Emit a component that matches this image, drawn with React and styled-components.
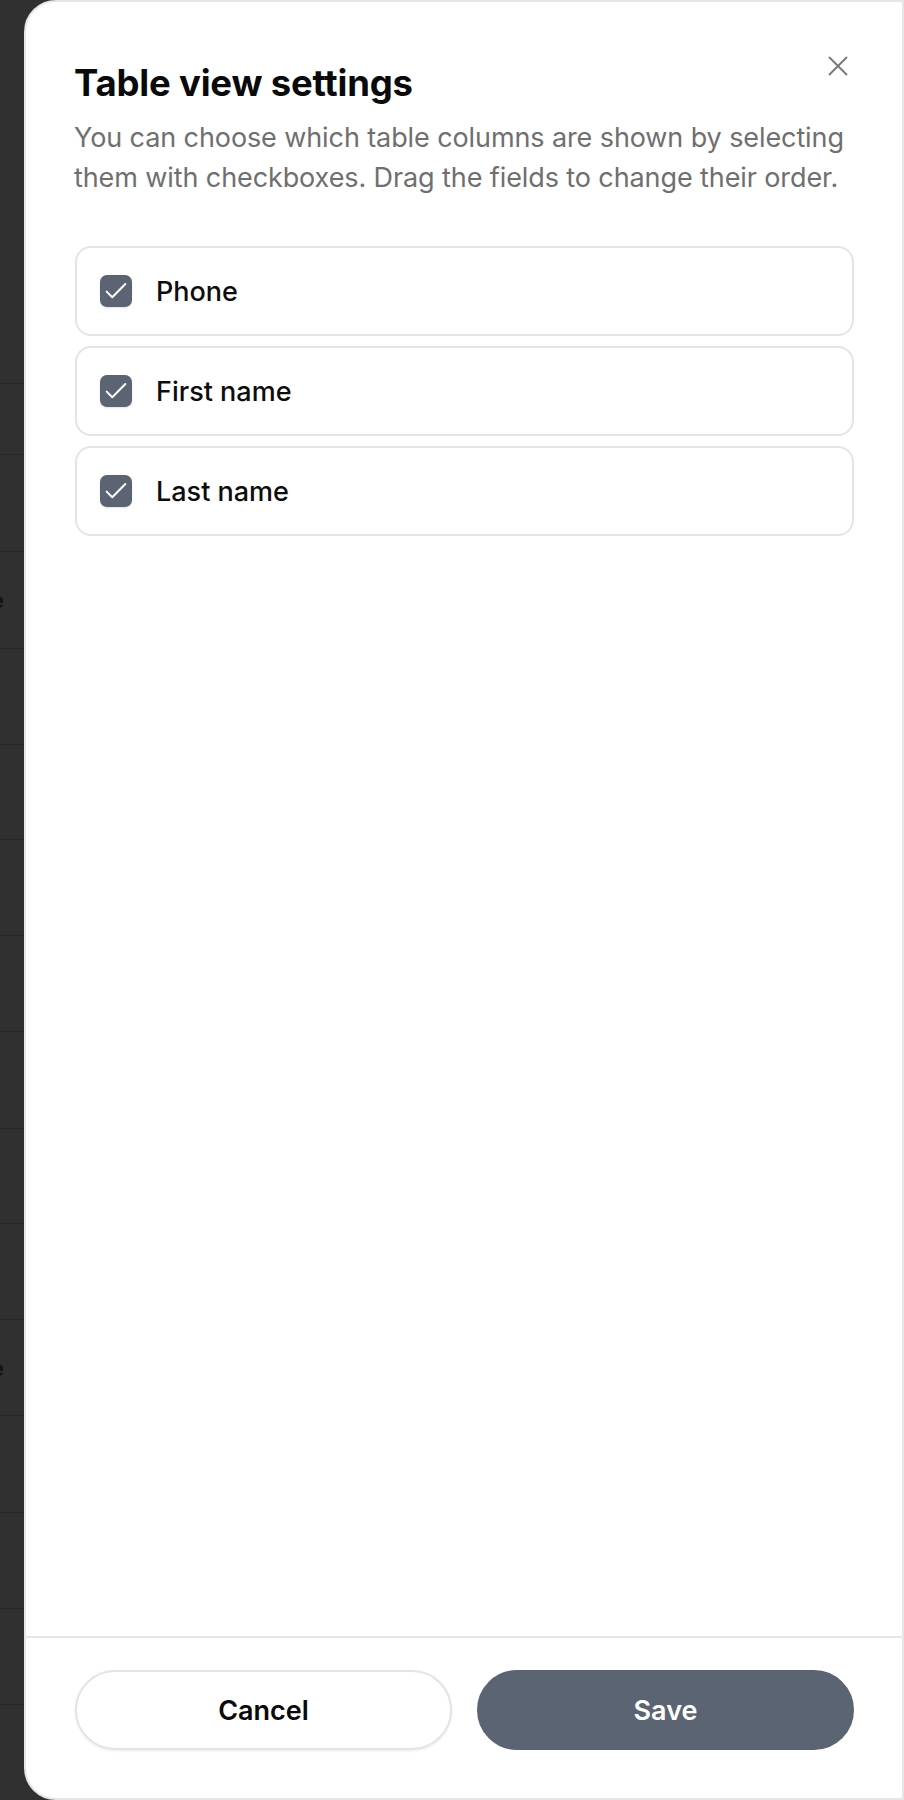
import React from "react";
import styled, { createGlobalStyle } from "styled-components";

const GlobalStyle = createGlobalStyle`
  * { box-sizing: border-box; }
  html, body { margin: 0; padding: 0; }
  body {
    font-family: "Inter", "Noto Sans", sans-serif;
    background: #303030;
  }
`;

const columns = [
  { id: "phone", label: "Phone" },
  { id: "first", label: "First name" },
  { id: "last", label: "Last name" },
];

const backdropRows = [
  { h: 71 },
  { h: 97 },
  { h: 97, peek: true },
  { h: 96 },
  { h: 95 },
  { h: 96 },
  { h: 96 },
  { h: 97 },
  { h: 95 },
  { h: 96 },
  { h: 96, peek: true },
  { h: 97 },
  { h: 96 },
  { h: 96 },
];

const App = () => {
  return (
    <>
      <GlobalStyle />
      <Page>
        <Backdrop>
          <BackdropHead />
          {backdropRows.map((r, i) => (
            <BackdropRow key={i} $h={r.h}>
              {r.peek && <Peek>e</Peek>}
            </BackdropRow>
          ))}
        </Backdrop>

        <Drawer>
          <CloseButton aria-label="Close">
            <svg width="20" height="20" viewBox="0 0 20 20" fill="none">
              <path
                d="M1.5 1.5l17 17M18.5 1.5l-17 17"
                stroke="#767676"
                strokeWidth="1.8"
                strokeLinecap="round"
              />
            </svg>
          </CloseButton>

          <Body>
            <Title>Table view settings</Title>
            <Description>
              You can choose which table columns are shown by selecting them
              with checkboxes. Drag the fields to change their order.
            </Description>

            <List>
              {columns.map((c) => (
                <Item key={c.id}>
                  <Checkbox>
                    <svg width="28" height="28" viewBox="0 0 24 24" fill="none">
                      <path
                        d="M4 12.5l4.8 4.8L20 6"
                        stroke="#fff"
                        strokeWidth="1.7"
                        strokeLinecap="round"
                        strokeLinejoin="round"
                      />
                    </svg>
                  </Checkbox>
                  <Label>{c.label}</Label>
                </Item>
              ))}
            </List>
          </Body>

          <Footer>
            <Button>Cancel</Button>
            <Button $primary>Save</Button>
          </Footer>
        </Drawer>
      </Page>
    </>
  );
};

export default App;

const Page = styled.div`
  position: relative;
  width: 904px;
  height: 1800px;
  overflow: hidden;
  background: #303030;
`;

const Backdrop = styled.div`
  display: flex;
  flex-direction: column;
`;

const BackdropHead = styled.div`
  height: 384px;
  border-bottom: 1px solid #282828;
`;

const BackdropRow = styled.div`
  height: ${(p) => p.$h}px;
  border-bottom: 1px solid #282828;
  display: flex;
  align-items: center;
`;

const Peek = styled.span`
  margin-left: -9px;
  font-size: 22px;
  color: #141414;
  font-weight: 600;
`;

const Drawer = styled.div`
  position: absolute;
  top: 0;
  right: 0;
  bottom: 0;
  width: 880px;
  background: #fff;
  border: 2px solid #e6e6e6;
  border-radius: 32px 0 0 32px;
  display: flex;
  flex-direction: column;
`;

const CloseButton = styled.button`
  position: absolute;
  top: 46px;
  right: 46px;
  width: 36px;
  height: 36px;
  padding: 0;
  border: none;
  background: transparent;
  display: flex;
  align-items: center;
  justify-content: center;
  cursor: pointer;
`;

const Body = styled.div`
  flex: 1;
  padding: 59px 48px 0 49px;
`;

const Title = styled.h2`
  margin: 0 0 0 -1px;
  font-size: 36.5px;
  line-height: 44px;
  font-weight: 700;
  letter-spacing: -0.2px;
  color: #0a0a0a;
`;

const Description = styled.p`
  margin: 13px 0 0 -1px;
  font-size: 27px;
  line-height: 40px;
  color: #6f6f6f;
  letter-spacing: -0.1px;
`;

const List = styled.div`
  margin-top: 48px;
  display: flex;
  flex-direction: column;
  gap: 10px;
`;

const Item = styled.div`
  height: 90px;
  border: 2px solid #e4e4e4;
  border-radius: 16px;
  display: flex;
  align-items: center;
  gap: 24px;
  padding: 0 23px;
  background: #fff;
`;

const Checkbox = styled.span`
  width: 32px;
  height: 32px;
  border-radius: 7px;
  background: #5b6473;
  display: flex;
  align-items: center;
  justify-content: center;
  box-shadow: 0 1px 2px rgba(0, 0, 0, 0.12);
  flex-shrink: 0;
`;

const Label = styled.span`
  font-size: 27px;
  font-weight: 500;
  color: #0d0d0d;
`;

const Footer = styled.div`
  border-top: 2px solid #e6e6e6;
  padding: 32px 48px 48px 49px;
  display: flex;
  gap: 25px;
`;

const Button = styled.button`
  flex: 1;
  height: 80px;
  border-radius: 40px;
  font-family: inherit;
  font-size: 27px;
  font-weight: 600;
  cursor: pointer;
  border: 2px solid ${(p) => (p.$primary ? "#5b6473" : "#e4e4e4")};
  background: ${(p) => (p.$primary ? "#5b6473" : "#fff")};
  color: ${(p) => (p.$primary ? "#fff" : "#0a0a0a")};
  box-shadow: ${(p) => (p.$primary ? "none" : "0 1px 3px rgba(0,0,0,0.08)")};
`;
